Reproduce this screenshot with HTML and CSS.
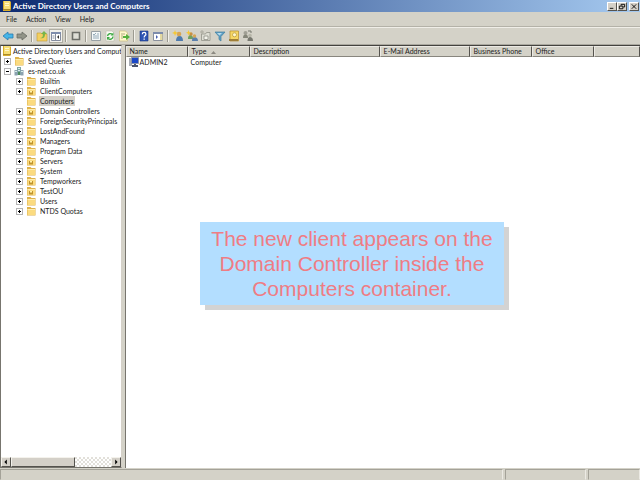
FILE: index.html
```html
<!DOCTYPE html>
<html lang="en">
<head>
    <meta charset="UTF-8">
    <meta name="viewport" content="width=device-width, initial-scale=1.0">
    <title>Active Directory Users and Computers</title>
    <link rel="stylesheet" href="styles.css">
</head>
<body>
    <!-- Shared icon shapes -->
    <svg class="symbols" aria-hidden="true">
        <symbol id="book" viewBox="0 0 10 10">
            <path d="M1 0h7l1 1v8l-1 1H1z" fill="#d9ae2c"/>
            <path d="M2 0h6v8H2z" fill="#f6de76"/>
            <path d="M3 2h4v1H3zM3 4h4v1H3z" fill="#fff6c8"/>
            <path d="M1 8h8v1H1z" fill="#a98a2c"/>
        </symbol>
        <symbol id="folder" viewBox="0 0 10 10">
            <path d="M1 1h3.500l1 1H9.500v7.500H1z" fill="#deb24a"/>
            <path d="M1.500 3h7.500v6H1.500z" fill="#fbdb80"/>
            <path d="M1.500 3h7.500v1h-7.500z" fill="#ffeeb0"/>
        </symbol>
        <symbol id="unit" viewBox="0 0 10 10">
            <use href="#folder"/>
            <path d="M3 5h4v3.500H3z" fill="#c0942c"/>
            <path d="M4 5h2v1.500H4z" fill="#fff3b0"/>
        </symbol>
        <symbol id="domain" viewBox="0 0 10 10">
            <path d="M3 1h4v8H3z" fill="#7fa6a6"/>
            <path d="M0.500 4h3v5.500h-3zM6.500 4h3v5.500h-3z" fill="#8ca2b0"/>
            <path d="M4 2h2v1H4zM4 4h2v1H4zM1 5h2v1H1zM7 5h2v1H7z" fill="#d8f0e8"/>
            <path d="M4 6h2v3H4z" fill="#4c8c5c"/>
        </symbol>
    </svg>

    <div class="window">
        <header class="title-bar">
            <svg class="icon"><use href="#book"/></svg>
            <h1>Active Directory Users and Computers</h1>
            <div class="window-buttons">
                <button type="button" aria-label="Minimize"><svg viewBox="0 0 9 8"><path d="M2 6h4" stroke="#000"/></svg></button>
                <button type="button" aria-label="Restore"><svg viewBox="0 0 9 8"><path d="M3.500 3V1.500h4v3H6M1.500 3.500h4v3h-4z" fill="none" stroke="#000"/></svg></button>
                <button type="button" class="close" aria-label="Close"><svg viewBox="0 0 9 8"><path d="M2 1.500l5 5M7 1.500l-5 5" stroke="#000"/></svg></button>
            </div>
        </header>

        <nav class="menu-bar">
            <a href="#">File</a>
            <a href="#">Action</a>
            <a href="#">View</a>
            <a href="#">Help</a>
        </nav>

        <div class="toolbar">
            <button type="button" aria-label="Back"><svg viewBox="0 0 12 12"><path d="M1 6l5-4v2h5v4H6v2z" fill="#45b5e8" stroke="#2a78ac" stroke-width=".8"/></svg></button>
            <button type="button" aria-label="Forward"><svg viewBox="0 0 12 12"><path d="M11 6L6 2v2H1v4h5v2z" fill="#929488" stroke="#686a62" stroke-width=".8"/></svg></button>
            <span class="divider"></span>
            <button type="button" aria-label="Up one level"><svg viewBox="0 0 12 12"><path d="M1 3h4l1 1h5v7H1z" fill="#f3cf60" stroke="#c49c34" stroke-width=".6"/><path d="M4 8c2 0 3-1 3-4H5l3-3 3 3H9c0 4-2 5-5 4z" fill="#78b548"/></svg></button>
            <button type="button" class="pressed" aria-label="Show console tree"><svg viewBox="0 0 12 12"><path d="M1.500 2.500h9v8h-9z" fill="#fff" stroke="#848ca0"/><path d="M1 2h10v2H1z" fill="#7d8cac"/><path d="M5.500 4v7M2.500 6h2M2.500 8h2" stroke="#868e9c"/><path d="M9 5v4L7 7z" fill="#333"/></svg></button>
            <span class="divider"></span>
            <button type="button" aria-label="Delete"><svg viewBox="0 0 12 12"><path d="M2.500 2.500h7v7h-7z" fill="#deded6" stroke="#6c6e68" stroke-width="1.600"/></svg></button>
            <span class="divider"></span>
            <button type="button" aria-label="Properties"><svg viewBox="0 0 12 12"><path d="M1.500 1.500h9v9h-9z" fill="#f4f8f8" stroke="#98a0a4"/><path d="M3 4l1 1 2-2M7 4h2M3 6h6M3 8h6" fill="none" stroke="#7d98a8" stroke-width=".8"/></svg></button>
            <button type="button" aria-label="Refresh"><svg viewBox="0 0 12 12"><path d="M2 1h6l2 2v8H2z" fill="#fbfbf4" stroke="#bcbcb0" stroke-width=".6"/><path d="M3.500 6a3 3 0 0 1 5-1.500M9 6.500a3 3 0 0 1-5 2" fill="none" stroke="#3faa46" stroke-width="1.400"/><path d="M9.500 2.500v3h-3zM3 10V7h3z" fill="#3faa46"/></svg></button>
            <button type="button" aria-label="Export list"><svg viewBox="0 0 12 12"><path d="M1.500 1h6l2 2v8h-8z" fill="#fff8cc" stroke="#c8bd7c" stroke-width=".7"/><path d="M3 4h4M3 6h2M3 8h2" stroke="#9c9770" stroke-width=".8"/><path d="M5 6h3V4l4 3-4 3V8H5z" fill="#55b13e"/></svg></button>
            <span class="divider"></span>
            <button type="button" aria-label="Help"><svg viewBox="0 0 12 12"><path d="M2 1h8v10H2z" fill="#2e55b4" stroke="#183580" stroke-width=".6"/><path d="M4.300 4.200c0-2.400 3.600-2.400 3.600 0C7.900 5.600 6.100 5.600 6.100 7.500" fill="none" stroke="#fff" stroke-width="1.200"/><path d="M5.500 8.500h1.300v1.300H5.500z" fill="#fff"/></svg></button>
            <button type="button" aria-label="Show action pane"><svg viewBox="0 0 12 12"><path d="M1.500 2.500h9v8h-9z" fill="#fff" stroke="#8a909c"/><path d="M1 2h10v2H1z" fill="#7d8cac"/><path d="M8 4h2.500v6H8z" fill="#e4d9a0"/><path d="M4 5v4l2-2z" fill="#4a62b0"/></svg></button>
            <span class="divider"></span>
            <button type="button" aria-label="New user"><svg viewBox="0 0 12 12"><path d="M4 11c0-3 1-5 3.500-5S11 8 11 11z" fill="#4e7bad"/><circle cx="7" cy="4" r="2.300" fill="#d8a553"/><path d="M3 0l.7 2L6 3l-2 .8L3 6l-.8-2.200L0 3l2.300-1z" fill="#f6c832"/></svg></button>
            <button type="button" aria-label="New group"><svg viewBox="0 0 12 12"><path d="M2 9c0-3 1-4 2.500-4S7 6 7 9z" fill="#6f9f5c"/><path d="M6 11c0-3 1-4 2.500-4S12 8 12 11z" fill="#5a7fac"/><circle cx="5" cy="4" r="1.700" fill="#c88f42"/><circle cx="8.500" cy="6" r="1.700" fill="#d8a553"/><path d="M2.500 0l.7 2L5 2.700l-1.800.7-.7 2-.7-2L0 2.700 1.800 2z" fill="#f6c832"/></svg></button>
            <button type="button" aria-label="New organizational unit"><svg viewBox="0 0 12 12"><path d="M1.500 4h4l1-1.500H10v8H1.500z" fill="#deded4" stroke="#929288" stroke-width=".8"/><path d="M4 6h4v3.500H4z" fill="#f4f4ec" stroke="#85857c" stroke-width=".7"/><path d="M2 0v4M0 2h4" stroke="#aaa99e"/></svg></button>
            <button type="button" aria-label="Filter"><svg viewBox="0 0 12 12"><path d="M1 2h10L7 6.500V11L5 9.500v-3z" fill="#5f9fc5" stroke="#417f9f" stroke-width=".7"/><path d="M3 3h5L5.500 5.500z" fill="#b7dcec"/></svg></button>
            <button type="button" aria-label="Find"><svg viewBox="0 0 12 12"><path d="M2 1h8.500v10H2z" fill="#f6d765" stroke="#b68e2d" stroke-width=".7"/><path d="M1 9h9v2H1z" fill="#9e7e38"/><circle cx="6.500" cy="4.800" r="2" fill="#fff8cf" stroke="#a9882e" stroke-width=".6"/></svg></button>
            <button type="button" aria-label="Add to group"><svg viewBox="0 0 12 12"><circle cx="3.500" cy="3" r="2" fill="#a09f94"/><path d="M1 8c0-3 1-3.500 2.500-3.500S6 5 6 8z" fill="#858679"/><circle cx="8" cy="5.500" r="1.800" fill="#b6b5a8"/><path d="M5.500 11c0-3 1-4 2.500-4s3 1 3 4z" fill="#77786f"/><path d="M6 1h3v2" fill="none" stroke="#77786f"/></svg></button>
        </div>

        <main class="panes">
            <aside class="tree-pane">
                <ul class="tree">
                    <li class="root"><svg class="icon"><use href="#book"/></svg><span>Active Directory Users and Comput</span></li>
                    <li><button type="button" class="expander" aria-label="Expand"></button><svg class="icon"><use href="#folder"/></svg><span class="label">Saved Queries</span></li>
                    <li><button type="button" class="expander open" aria-label="Collapse"></button><svg class="icon"><use href="#domain"/></svg><span class="label">es-net.co.uk</span></li>
                    <li class="child"><button type="button" class="expander" aria-label="Expand"></button><svg class="icon"><use href="#folder"/></svg><span class="label">Builtin</span></li>
                    <li class="child"><button type="button" class="expander" aria-label="Expand"></button><svg class="icon"><use href="#unit"/></svg><span class="label">ClientComputers</span></li>
                    <li class="child leaf"><svg class="icon"><use href="#folder"/></svg><span class="label selected">Computers</span></li>
                    <li class="child"><button type="button" class="expander" aria-label="Expand"></button><svg class="icon"><use href="#unit"/></svg><span class="label">Domain Controllers</span></li>
                    <li class="child"><button type="button" class="expander" aria-label="Expand"></button><svg class="icon"><use href="#folder"/></svg><span class="label">ForeignSecurityPrincipals</span></li>
                    <li class="child"><button type="button" class="expander" aria-label="Expand"></button><svg class="icon"><use href="#folder"/></svg><span class="label">LostAndFound</span></li>
                    <li class="child"><button type="button" class="expander" aria-label="Expand"></button><svg class="icon"><use href="#unit"/></svg><span class="label">Managers</span></li>
                    <li class="child"><button type="button" class="expander" aria-label="Expand"></button><svg class="icon"><use href="#folder"/></svg><span class="label">Program Data</span></li>
                    <li class="child"><button type="button" class="expander" aria-label="Expand"></button><svg class="icon"><use href="#unit"/></svg><span class="label">Servers</span></li>
                    <li class="child"><button type="button" class="expander" aria-label="Expand"></button><svg class="icon"><use href="#folder"/></svg><span class="label">System</span></li>
                    <li class="child"><button type="button" class="expander" aria-label="Expand"></button><svg class="icon"><use href="#unit"/></svg><span class="label">Tempworkers</span></li>
                    <li class="child"><button type="button" class="expander" aria-label="Expand"></button><svg class="icon"><use href="#unit"/></svg><span class="label">TestOU</span></li>
                    <li class="child"><button type="button" class="expander" aria-label="Expand"></button><svg class="icon"><use href="#folder"/></svg><span class="label">Users</span></li>
                    <li class="child"><button type="button" class="expander" aria-label="Expand"></button><svg class="icon"><use href="#folder"/></svg><span class="label">NTDS Quotas</span></li>
                </ul>
                <div class="scrollbar">
                    <button type="button" aria-label="Scroll left"><svg viewBox="0 0 10 9"><path d="M6 2v6L3 5z"/></svg></button>
                    <div class="thumb"></div>
                    <div class="track"></div>
                    <button type="button" aria-label="Scroll right"><svg viewBox="0 0 10 9"><path d="M4 2v6l3-3z"/></svg></button>
                </div>
            </aside>

            <section class="list-pane">
                <table class="list">
                    <colgroup>
                        <col class="col-name">
                        <col class="col-type">
                        <col class="col-description">
                        <col class="col-email">
                        <col class="col-phone">
                        <col class="col-office">
                        <col>
                    </colgroup>
                    <thead>
                        <tr>
                            <th>Name</th>
                            <th>Type <svg class="sort" viewBox="0 0 5 3"><path d="M0 3l2.500-3L5 3z"/></svg></th>
                            <th>Description</th>
                            <th>E-Mail Address</th>
                            <th>Business Phone</th>
                            <th>Office</th>
                            <th></th>
                        </tr>
                    </thead>
                    <tbody>
                        <tr>
                            <td><span class="entry"><svg class="icon" viewBox="0 0 10 10"><path d="M0 1h3v8H0z" fill="#a8acb4"/><path d="M2.500.500h7v6h-7z" fill="#1c48c8" stroke="#8c94a8"/><path d="M5 7h2v1h2v2H3V8h2z" fill="#4c546c"/></svg>ADMIN2</span></td>
                            <td>Computer</td>
                            <td></td>
                            <td></td>
                            <td></td>
                            <td></td>
                            <td></td>
                        </tr>
                    </tbody>
                </table>
            </section>
        </main>

        <footer class="status-bar">
            <span></span>
            <span></span>
            <span></span>
        </footer>
    </div>

    <p class="callout">The new client appears on the Domain Controller inside the Computers container.</p>
</body>
</html>
```
FILE: styles.css
```css
* {
    margin: 0;
    padding: 0;
    box-sizing: border-box;
}

body {
    font-family: Lato, 'Noto Sans', sans-serif;
    font-size: 7px;
    line-height: 10px;
    color: #222;
    background-color: #d4d2c8;
}

button {
    border: none;
    background: none;
    font: inherit;
}

svg {
    display: block;
}

.symbols {
    position: absolute;
    width: 0;
    height: 0;
}

.icon {
    width: 10px;
    height: 10px;
    flex: none;
}

.window {
    display: flex;
    flex-direction: column;
    height: 100vh;
}

/* Title bar */
.title-bar {
    display: flex;
    align-items: center;
    gap: 1px;
    height: 12px;
    padding: 0 1px 0 2px;
    background: linear-gradient(to right, #0c2a70, #a6caf0);
    color: #fff;
}

.title-bar h1 {
    flex: 1;
    font-size: 8px;
    font-weight: bold;
}

.window-buttons {
    display: flex;
}

.window-buttons button {
    width: 10px;
    height: 9px;
    background: #d4d0c8;
    border: 1px solid;
    border-color: #fff #55534e #55534e #fff;
}

.window-buttons .close {
    margin-left: 2px;
}

/* Menu */
.menu-bar {
    display: flex;
    gap: 9px;
    height: 15px;
    padding: 0 6px;
    line-height: 15px;
    border-bottom: 1px solid #b4b2a8;
}

.menu-bar a {
    color: #222;
    text-decoration: none;
}

/* Toolbar */
.toolbar {
    display: flex;
    align-items: center;
    gap: 2px;
    height: 18px;
    padding: 0 2px;
    border-top: 1px solid #f0eee8;
    border-bottom: 1px solid #aaa89f;
}

.toolbar button {
    width: 12px;
    height: 12px;
}

.toolbar .pressed {
    background: #f2f1ec;
    outline: 1px solid #b0aea4;
}

.divider {
    width: 2px;
    height: 12px;
    margin: 0 1px;
    border-left: 1px solid #9c9a90;
    border-right: 1px solid #f4f2ec;
}

/* Panes */
.panes {
    display: flex;
    flex: 1;
    gap: 3px;
    min-height: 0;
}

.tree-pane,
.list-pane {
    background: #fff;
    border: 1px solid #77756e;
    border-top-color: #44433f;
}

.tree-pane {
    display: flex;
    flex-direction: column;
    width: 19%;
    border-right-color: #d4d0c8;
    overflow: hidden;
}

.tree {
    flex: 1;
    list-style: none;
}

.tree li {
    display: flex;
    align-items: center;
    gap: 3px;
    height: 10px;
    padding-left: 3px;
    white-space: nowrap;
}

.tree .root {
    gap: 1px;
    padding-left: 1px;
}

.tree .child {
    padding-left: 15px;
}

.tree .leaf {
    padding-left: 25px;
}

.label {
    padding: 0 1px;
}

.selected {
    background: #d4d0c8;
}

.expander {
    flex: none;
    width: 7px;
    height: 7px;
    border: 1px solid #b4b4b4;
    background: linear-gradient(#000, #000) center / 3px 1px no-repeat,
                linear-gradient(#000, #000) center / 1px 3px no-repeat;
}

.expander.open {
    background: linear-gradient(#000, #000) center / 3px 1px no-repeat;
}

/* Scrollbar */
.scrollbar {
    display: flex;
    height: 10px;
}

.scrollbar button,
.thumb {
    background: #d4d0c8;
    border: 1px solid;
    border-color: #f4f2ec #55534e #55534e #f4f2ec;
}

.scrollbar button {
    width: 10px;
}

.thumb {
    flex: 64;
}

.track {
    flex: 36;
    background: repeating-conic-gradient(#fff 0 25%, #e2e0da 0 50%) 0 0 / 4px 4px;
}

/* List */
.list-pane {
    flex: 1;
    border-right: none;
    border-bottom: none;
}

.list {
    width: 100%;
    table-layout: fixed;
    border-collapse: separate;
    border-spacing: 0;
}

.col-name,
.col-type,
.col-phone,
.col-office {
    width: 62px;
}

.col-description {
    width: 130px;
}

.col-email {
    width: 90px;
}

.list th {
    height: 11px;
    padding: 0 3px;
    background: #d4d2c8;
    border: 1px solid;
    border-color: #eceae4 #55534e #88867e #eceae4;
    font-weight: normal;
    line-height: 9px;
    text-align: left;
    white-space: nowrap;
}

.list td {
    height: 10px;
    padding: 0 3px;
}

.entry {
    display: flex;
    gap: 1px;
}

.sort {
    display: inline-block;
    width: 5px;
    height: 3px;
    margin-left: 3px;
    vertical-align: middle;
    fill: #8c8a82;
}

/* Status bar */
.status-bar {
    display: grid;
    grid-template-columns: 1fr 81px 52px;
    gap: 2px;
    height: 12px;
    padding-top: 1px;
}

.status-bar span {
    border: 1px solid;
    border-color: #a4a298 #eceae4 #d4d2c8 #a4a298;
}

/* Message over the window */
.callout {
    position: absolute;
    top: 222px;
    left: 200px;
    width: 304px;
    padding: 4px 6px;
    background: #b3deff;
    box-shadow: 5px 5px 0 #d3d3d3;
    color: #ef7c84;
    font-family: 'Liberation Sans', Arial, sans-serif;
    font-size: 21px;
    line-height: 25px;
    text-align: center;
}
```
